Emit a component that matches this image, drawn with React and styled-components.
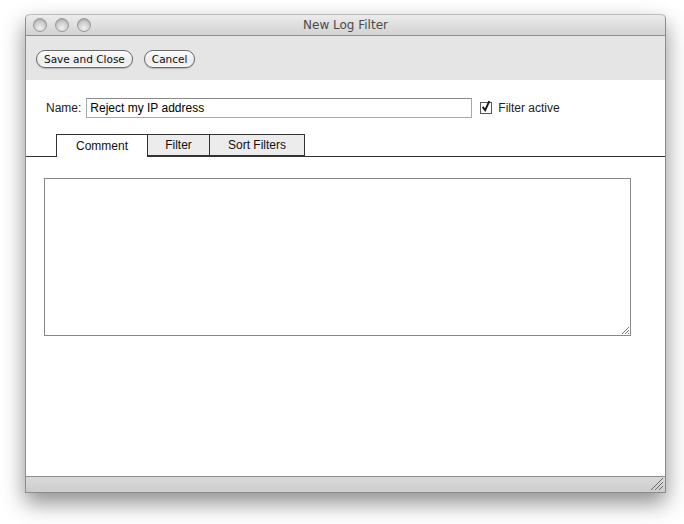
import React from 'react';
import styled, { createGlobalStyle } from 'styled-components';

const GlobalStyle = createGlobalStyle`
    html, body {
        margin: 0;
        padding: 0;
        background: #fff;
    }
`

const tabs = [
    { label: 'Comment', width: 92, active: true },
    { label: 'Filter', width: 62 },
    { label: 'Sort Filters', width: 95 }
];

const App = () => (
    <Page>
        <GlobalStyle />
        <Window>
            <TitleBar>
                <Lights>
                    <Light />
                    <Light />
                    <Light />
                </Lights>
                <Title>New Log Filter</Title>
            </TitleBar>

            <Toolbar>
                <PillButton>Save and Close</PillButton>
                <PillButton>Cancel</PillButton>
            </Toolbar>

            <Content>
                <NameRow>
                    <Label>Name:</Label>
                    <NameInput defaultValue='Reject my IP address' />
                    <CheckLabel>
                        <CheckBox>
                            <svg width='12' height='13' viewBox='0 0 12 13'>
                                <path d='M2 7 L5 11 L10 0' fill='none' stroke='#111' strokeWidth='2.2' />
                            </svg>
                        </CheckBox>
                        Filter active
                    </CheckLabel>
                </NameRow>

                <TabBar>
                    {tabs.map((t) => (
                        <Tab key={t.label} $active={t.active} $width={t.width}>
                            {t.label}
                        </Tab>
                    ))}
                </TabBar>

                <Panel>
                    <CommentBox>
                        <Grip>
                            <svg width='8' height='8' viewBox='0 0 8 8'>
                                <path d='M1 8 L8 1 M4 8 L8 4 M7 8 L8 7' stroke='#777' strokeWidth='1' />
                            </svg>
                        </Grip>
                    </CommentBox>
                </Panel>
            </Content>

            <StatusBar>
                <svg width='12' height='12' viewBox='0 0 12 12'>
                    <path d='M0 12 L12 0 M4 12 L12 4 M8 12 L12 8' stroke='#6a6a6a' strokeWidth='1' />
                </svg>
            </StatusBar>
        </Window>
    </Page>
);

export default App;

const Page = styled.div`
    width: 684px;
    height: 524px;
    padding: 14px 0 0 25px;
    box-sizing: border-box;
    overflow: hidden;
`

const Window = styled.div`
    width: 641px;
    height: 479px;
    display: flex;
    flex-direction: column;
    box-sizing: border-box;
    border: 1px solid #8c8c8c;
    border-top: none;
    border-radius: 5px 5px 0 0;
    background: #fff;
    box-shadow: 0 10px 22px rgba(0, 0, 0, 0.45);
`

const TitleBar = styled.div`
    height: 22px;
    flex-shrink: 0;
    position: relative;
    display: flex;
    align-items: center;
    justify-content: center;
    background: linear-gradient(#ececec, #d2d2d2);
    border-top: 1px solid #bdbdbd;
    border-bottom: 1px solid #8e8e8e;
    border-radius: 5px 5px 0 0;
    box-sizing: border-box;
`

const Lights = styled.div`
    position: absolute;
    left: 7px;
    top: 3px;
    display: flex;
    gap: 8px;
`

const Light = styled.div`
    width: 14px;
    height: 14px;
    border-radius: 50%;
    box-sizing: border-box;
    border: 1px solid #999;
    background: radial-gradient(circle at 50% 75%, #f0f0f0, #c0c0c0 75%);
    box-shadow: inset 0 1px 1px rgba(0, 0, 0, 0.15);
`

const Title = styled.div`
    font-family: "DejaVu Sans", sans-serif;
    font-size: 12px;
    color: #4a4a4a;
`

const Toolbar = styled.div`
    height: 44px;
    flex-shrink: 0;
    display: flex;
    align-items: center;
    gap: 11px;
    padding: 1px 0 0 10px;
    box-sizing: border-box;
    background: #e5e5e5;
`

const PillButton = styled.button`
    height: 18px;
    padding: 0 7px;
    border: 1px solid #6a6a6a;
    border-radius: 9px;
    background: linear-gradient(#fdfdfd, #ececec 60%, #f6f6f6);
    font-family: "DejaVu Sans", sans-serif;
    font-size: 10.5px;
    color: #111;
    line-height: 16px;
    box-shadow: 0 1px 1px rgba(0, 0, 0, 0.2);
`

const Content = styled.div`
    flex: 1;
    display: flex;
    flex-direction: column;
    font-family: "Liberation Sans", Arial, sans-serif;
    font-size: 12px;
    color: #111;
`

const NameRow = styled.div`
    display: flex;
    align-items: center;
    padding: 18px 0 0 20px;
    height: 20px;
`

const Label = styled.span`
    margin-right: 5px;
    color: #222;
`

const NameInput = styled.input`
    width: 386px;
    height: 20px;
    box-sizing: border-box;
    border: 1px solid #a9a9a9;
    border-top-color: #8a8a8a;
    padding: 0 3px;
    font-family: "Liberation Sans", Arial, sans-serif;
    font-size: 12px;
    color: #000;
    outline: none;
`

const CheckLabel = styled.span`
    display: flex;
    align-items: center;
    margin-left: 8px;
    color: #222;
`

const CheckBox = styled.span`
    width: 12px;
    height: 12px;
    margin-right: 6px;
    box-sizing: border-box;
    border: 1px solid #555;
    display: flex;
    align-items: flex-end;
    overflow: visible;

    svg {
        margin: 0 0 0 0;
    }
`

const TabBar = styled.div`
    display: flex;
    margin-top: 16px;
    padding-left: 30px;
    border-bottom: 1px solid #333;
    height: 22px;
`

const Tab = styled.div`
    width: ${(p) => p.$width}px;
    height: ${(p) => (p.$active ? 23 : 22)}px;
    box-sizing: border-box;
    display: flex;
    align-items: center;
    justify-content: center;
    border: 1px solid #333;
    border-left-width: ${(p) => (p.$active ? 1 : 0)}px;
    border-bottom: ${(p) => (p.$active ? 'none' : '1px solid #333')};
    background: ${(p) => (p.$active ? '#fff' : '#ececec')};
    color: #111;
    padding-bottom: ${(p) => (p.$active ? 1 : 0)}px;
`

const Panel = styled.div`
    padding: 21px 0 0 18px;
`

const CommentBox = styled.div`
    width: 587px;
    height: 158px;
    box-sizing: border-box;
    border: 1px solid #888;
    position: relative;
`

const Grip = styled.div`
    position: absolute;
    right: 1px;
    bottom: 1px;
    display: flex;
`

const StatusBar = styled.div`
    height: 16px;
    margin-top: auto;
    flex-shrink: 0;
    display: flex;
    justify-content: flex-end;
    align-items: flex-end;
    padding: 0 2px 2px 0;
    box-sizing: border-box;
    border-top: 1px solid #8c8c8c;
    background: linear-gradient(#dadada, #cdcdcd);
`
